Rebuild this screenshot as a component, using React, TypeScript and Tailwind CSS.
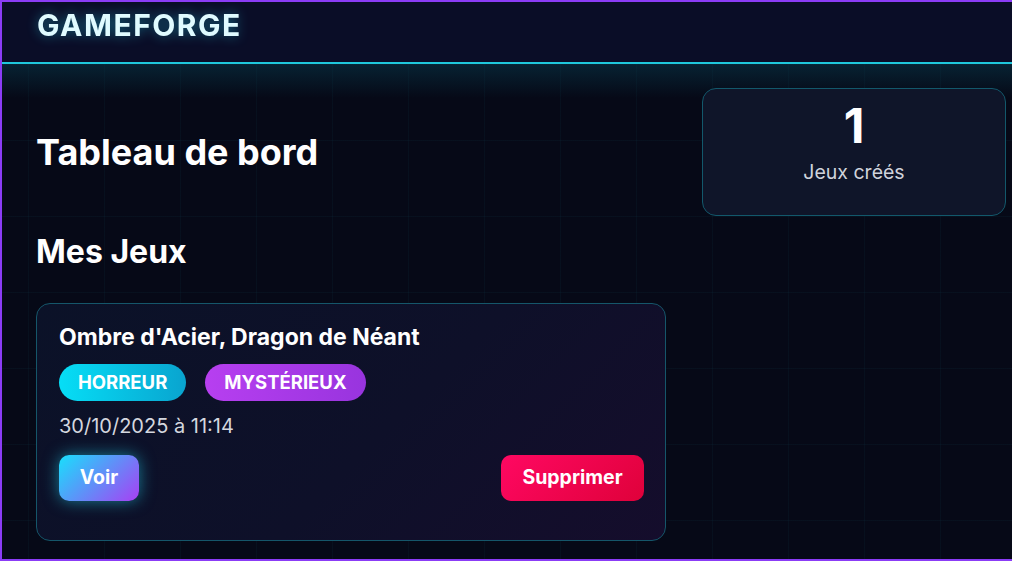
import React from "react";

export default function App() {
  return (
    <div className="w-[1012px] h-[561px] overflow-hidden border-t-2 border-l-2 border-b-2 border-[#8b3cf6] bg-[#060917] font-['Inter',sans-serif] relative">
      {/* grid background */}
      <div className="absolute inset-0 bg-[linear-gradient(rgba(34,211,238,0.035)_1px,transparent_1px),linear-gradient(90deg,rgba(34,211,238,0.035)_1px,transparent_1px)] bg-[size:76px_76px] bg-[position:26px_62px]" />
      <div className="relative">
        <header className="h-[62px] bg-[#0a0d27] pl-[35px] pt-[5px] border-b-2 border-[#1fc8dc]">
          <div className="text-[30px] leading-[36px] font-bold tracking-[1.5px] text-[#e0fbff] drop-shadow-[0_0_6px_rgba(34,211,238,0.45)]">
            GAMEFORGE
          </div>
        </header>
        <div className="absolute left-0 right-0 top-[62px] h-[34px] bg-[linear-gradient(180deg,rgba(8,60,78,0.5),rgba(6,9,23,0))]" />
        <main className="relative pl-[34px] pr-[6px] pt-[24px]">
          <div className="flex items-center justify-between">
            <h1 className="text-[36px] leading-[40px] font-bold text-white">Tableau de bord</h1>
            <div className="w-[304px] h-[128px] rounded-[14px] border border-[#12586b] bg-[#0f1529] flex flex-col items-center pt-[13px]">
              <div className="text-[48px] leading-[48px] font-bold text-white">1</div>
              <div className="mt-[10px] text-[19.5px] leading-[24px] text-[#cfd3dc]">Jeux créés</div>
            </div>
          </div>
          <h2 className="mt-[16px] text-[32px] leading-[40px] font-bold text-white">Mes Jeux</h2>
          <div className="mt-[31px] w-[630px] rounded-[14px] border border-[#15566a] bg-[linear-gradient(135deg,#0b1228_0%,#0e1029_55%,#150d2c_100%)] pl-[22px] pr-[21px] pt-[19px] pb-[39px]">
            <div className="text-[23px] leading-[28px] font-bold text-white">Ombre d'Acier, Dragon de Néant</div>
            <div className="mt-[13px] flex gap-[19px]">
              <span className="h-[37px] px-[19px] rounded-full bg-[linear-gradient(90deg,#06def6,#09a4cf)] flex items-center text-[18.5px] font-bold text-white">HORREUR</span>
              <span className="h-[37px] px-[19px] rounded-full bg-[linear-gradient(90deg,#b73ff0,#9834de)] flex items-center text-[18.5px] font-bold text-white">MYSTÉRIEUX</span>
            </div>
            <div className="mt-[13px] text-[20px] leading-[24px] text-[#d4d7df]">30/10/2025 à 11:14</div>
            <div className="mt-[17px] flex justify-between">
              <button className="h-[46px] w-[80px] rounded-[10px] bg-[linear-gradient(135deg,#18e0fc,#a83ff4)] text-[19.5px] font-bold text-white shadow-[0_0_16px_rgba(34,211,238,0.55)]">
                Voir
              </button>
              <button className="h-[46px] w-[143px] rounded-[10px] bg-[linear-gradient(135deg,#ff0862,#df013a)] text-[19.5px] font-bold text-white">
                Supprimer
              </button>
            </div>
          </div>
        </main>
      </div>
    </div>
  );
}
